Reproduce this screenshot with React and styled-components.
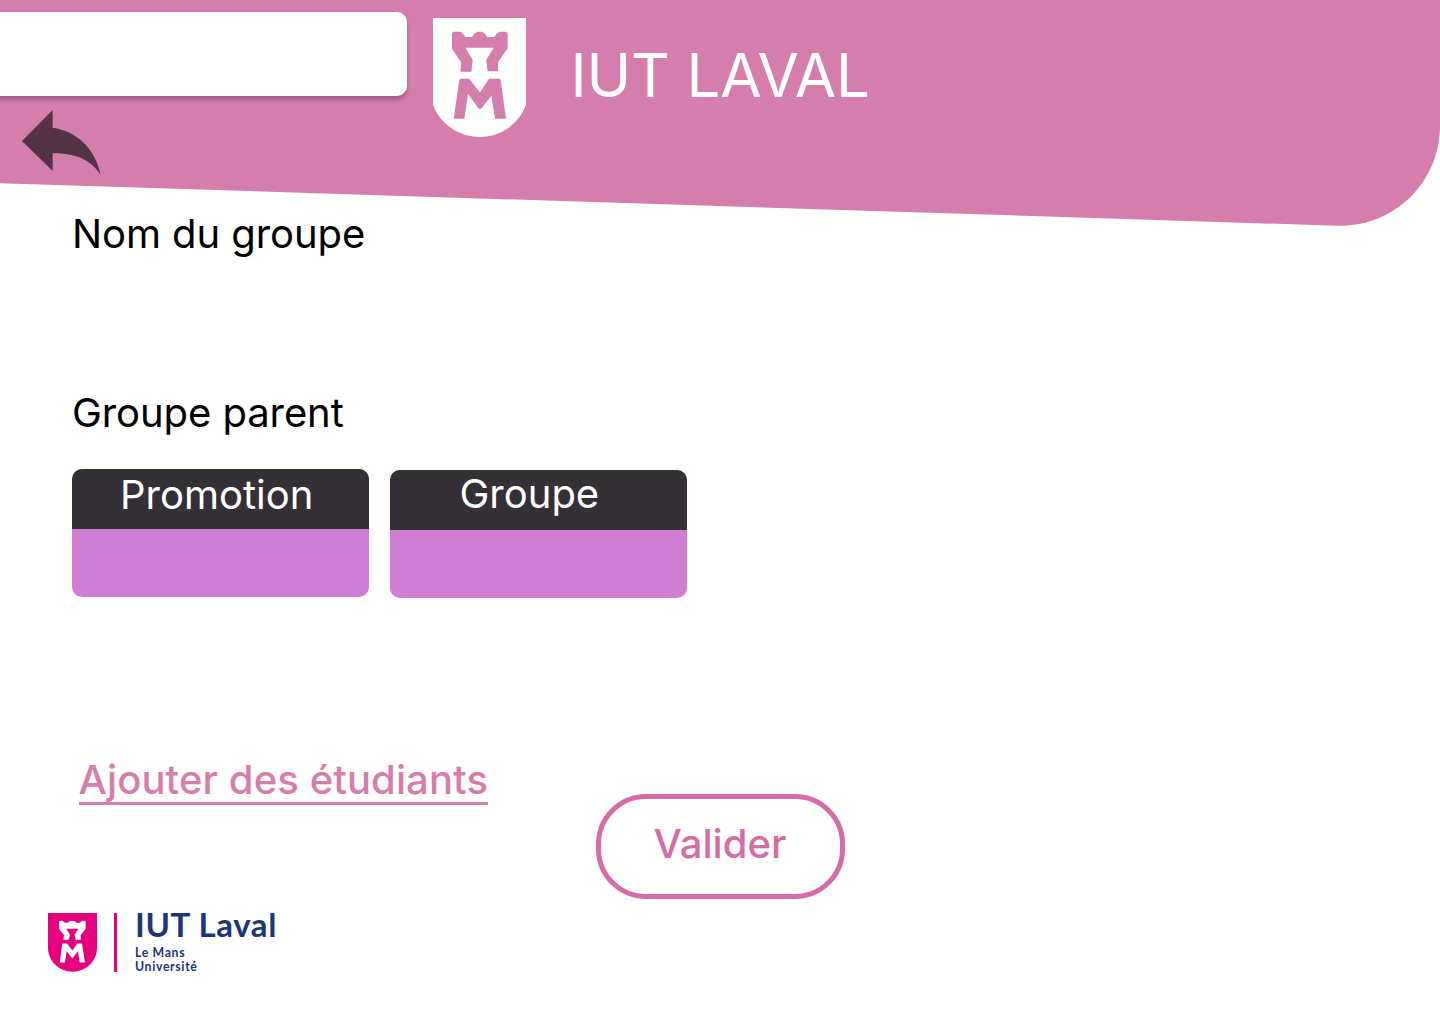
import React from "react";
import styled, { createGlobalStyle } from "styled-components";

const GlobalStyle = createGlobalStyle`
  *, *::before, *::after { box-sizing: border-box; }
  body { margin: 0; background: #fff; }
  button { font: inherit; cursor: pointer; }
`;

const Page = styled.div`
  width: 1440px;
  height: 1024px;
  display: flex;
  flex-direction: column;
  overflow: hidden;
  font-family: Inter, "Liberation Sans", sans-serif;
`;

const Header = styled.header`
  display: flex;
  flex: none;
  align-items: flex-start;
  height: 228px;
  background: #d57eae;
  clip-path: path("M0 0H1440V126C1440 182.5 1393.6 227.6 1337 225.7L0 183.2Z");
`;

const HeaderStart = styled.div`
  display: flex;
  flex-direction: column;
  align-items: flex-start;
  width: 433px;
  padding-top: 12px;
`;

const SearchBox = styled.div`
  width: 417px;
  height: 84px;
  margin-left: -10px;
  background: #fff;
  border-radius: 10px;
  box-shadow: 0 4px 4px rgba(0, 0, 0, 0.25);
`;

const BackButton = styled.button`
  display: block;
  margin: 13.7px 0 0 22px;
  padding: 0;
  border: 0;
  background: none;
  line-height: 0;
`;

const Crest = styled.svg`
  display: block;
  flex: none;
  width: ${(p) => p.$width}px;
  height: ${(p) => p.$height}px;
  margin-top: ${(p) => p.$top || 0}px;
`;

const Title = styled.h1`
  margin: 39px 0 0 44.5px;
  font-size: 60px;
  font-weight: 400;
  line-height: 73px;
  letter-spacing: -0.1px;
  color: #fff;
  white-space: nowrap;
`;

const Form = styled.main`
  display: flex;
  flex-direction: column;
  align-items: flex-start;
  margin-top: -18px;
  padding-left: 72px;
`;

const Label = styled.h2`
  margin: 0 0 ${(p) => p.$gap}px;
  font-size: 40px;
  font-weight: 400;
  line-height: 48px;
  letter-spacing: -0.08px;
  color: #000;
  white-space: nowrap;
`;

const Selectors = styled.div`
  display: flex;
  gap: 21px;
`;

const Selector = styled.section`
  width: 297px;
  height: 128px;
  margin-top: ${(p) => p.$drop || 0}px;
  border-radius: 10px;
  overflow: hidden;
  background: #d07dd4;
`;

const SelectorTitle = styled.h3`
  height: 60px;
  margin: 0;
  padding: ${(p) => p.$top}px 0 0 ${(p) => p.$left}px;
  background: #352f37;
  color: #fff;
  font-size: 40px;
  font-weight: 400;
  line-height: 48px;
  white-space: nowrap;
`;

const AddLink = styled.a`
  margin: 158px 0 0 6.5px;
  height: 49px;
  border-bottom: 3px solid #d57eae;
  color: #d57eae;
  font-size: 40px;
  font-weight: 500;
  line-height: 48px;
  letter-spacing: 0.1px;
  white-space: nowrap;
`;

const SubmitButton = styled.button`
  width: 249px;
  height: 105px;
  margin: -11px 0 0 524px;
  padding: 0 1px 5px 0;
  border: 5px solid #d56ba7;
  border-radius: 50px;
  background: #fff;
  color: #d56ba7;
  font-size: 40px;
  font-weight: 500;
  line-height: 48px;
`;

const Footer = styled.footer`
  display: flex;
  align-items: flex-start;
  margin-top: 14px;
  padding-left: 48px;
`;

const Divider = styled.span`
  width: 3px;
  height: 59px;
  margin-left: 17px;
  background: #e6007e;
`;

const Brand = styled.div`
  display: flex;
  flex-direction: column;
  margin: -9px 0 0 18px;
  color: #1c3678;
  font-family: Lato, "Open Sans", sans-serif;
  font-weight: 700;
  white-space: nowrap;
`;

const BrandName = styled.span`
  margin-bottom: 2px;
  font-size: 33px;
  line-height: 40px;
  letter-spacing: 0.6px;
`;

const BrandSub = styled.span`
  font-size: 12.3px;
  line-height: 14px;
  letter-spacing: 0.65px;
`;

function ShieldLogo({ shield, tower, ...size }) {
  return (
    <Crest {...size} viewBox="39 24 279 357" preserveAspectRatio="none" aria-hidden="true">
      <path fill={shield} d="M39 24H318V283C300 339 244 381 179 381C114 381 57 339 39 283Z" />
      <g fill={tower}>
        <path d="M96 71Q97 66 101 65H122Q128 68 132 76L136 81H155Q158 80 160 75Q163 68 168 68L172 65H186L190 68Q196 69 199 77Q201 81 204 81H222Q226 80 229 72Q234 68 240 65H258Q263 68 263 72V115L234 157V184H203L199 153V149L221 113H136L158 149V153L154 185H121L124 158L96 116Z" />
        <path d="M118 210Q119 206 123 206H147L180 247L207 206H236Q241 206 242 210L258 326H225L214 257L186 293Q180 300 174 293L144 252L133 326H101Z" />
      </g>
    </Crest>
  );
}

function SmallCrest() {
  return (
    <Crest $width={49} $height={59} viewBox="24 41 147 176" preserveAspectRatio="none" aria-hidden="true">
      <path fill="#e6007e" d="M24 41H171V144C171 184 139 216 97.500 216C56 216 24 184 24 144Z" />
      <g fill="#fff">
        <path d="M57 65L67 64L75 70H84L90 65H104L110 70H119L127 64L137 65V88L122 107L123 121H107L104 106L115 88H79L90 106L86 121H70L72 107L57 88Z" />
        <path d="M67 132H81L97 153L112 132H126L135 189H119L114 155L97 177L80 155L75 189H59Z" />
      </g>
    </Crest>
  );
}

export default function App() {
  return (
    <>
      <GlobalStyle />
      <Page>
        <Header>
          <HeaderStart>
            <SearchBox />
            <BackButton aria-label="Retour">
              <svg width="79" height="65" viewBox="66 59 237 195">
                <path fill="#553346" d="M66 152L158 59V112C230 122 286 174 302 254C274 210 230 189 158 189V242Z" />
              </svg>
            </BackButton>
          </HeaderStart>
          <ShieldLogo shield="#fff" tower="#d57eae" $width={93} $height={119} $top={18} />
          <Title>IUT LAVAL</Title>
        </Header>
        <Form>
          <Label $gap={131}>Nom du groupe</Label>
          <Label $gap={32}>Groupe parent</Label>
          <Selectors>
            <Selector>
              <SelectorTitle $top={2} $left={48}>Promotion</SelectorTitle>
            </Selector>
            <Selector $drop={1}>
              <SelectorTitle $top={0} $left={69.5}>Groupe</SelectorTitle>
            </Selector>
          </Selectors>
          <AddLink>Ajouter des étudiants</AddLink>
          <SubmitButton>Valider</SubmitButton>
        </Form>
        <Footer>
          <SmallCrest />
          <Divider />
          <Brand>
            <BrandName>IUT Laval</BrandName>
            <BrandSub>Le Mans</BrandSub>
            <BrandSub>Université</BrandSub>
          </Brand>
        </Footer>
      </Page>
    </>
  );
}
